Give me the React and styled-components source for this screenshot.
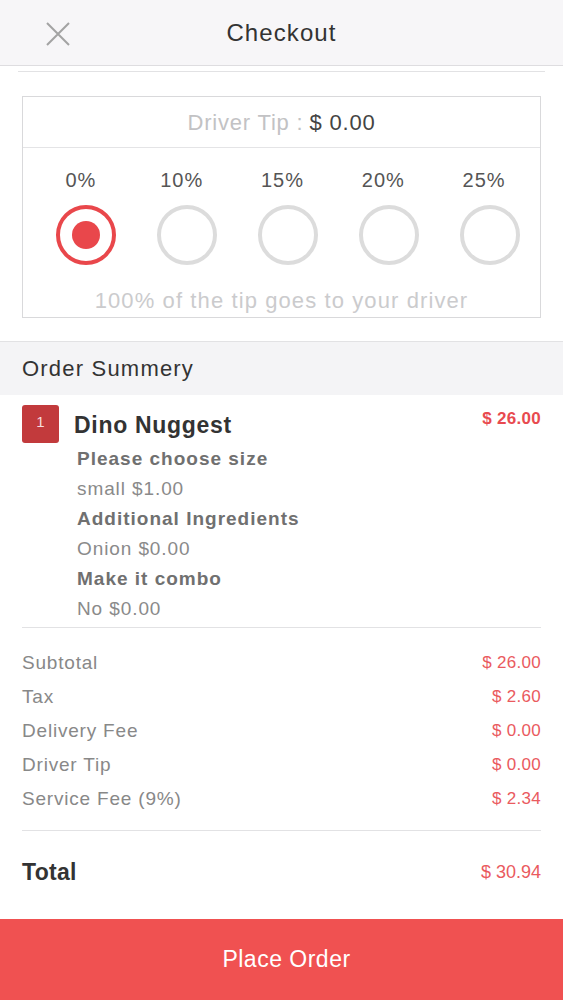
import React from 'react';
import styled, { createGlobalStyle } from 'styled-components';

const GlobalStyle = createGlobalStyle`
  html, body {
    margin: 0;
    padding: 0;
    background: #ffffff;
    font-family: "Liberation Sans", Arial, sans-serif;
  }
`;

const tips = ['0%', '10%', '15%', '20%', '25%'];

const options = [
  { label: 'Please choose size', value: 'small $1.00' },
  { label: 'Additional Ingredients', value: 'Onion $0.00' },
  { label: 'Make it combo', value: 'No $0.00' },
];

const fees = [
  { label: 'Subtotal', value: '$ 26.00' },
  { label: 'Tax', value: '$ 2.60' },
  { label: 'Delivery Fee', value: '$ 0.00' },
  { label: 'Driver Tip', value: '$ 0.00' },
  { label: 'Service Fee (9%)', value: '$ 2.34' },
];

const App = () => {
  return (
    <Page>
      <GlobalStyle />
      <Header>
        <CloseButton>
          <svg width="26" height="26" viewBox="0 0 26 26">
            <path d="M2 2 L24 24 M24 2 L2 24" stroke="#a3a3a3" strokeWidth="2" fill="none" />
          </svg>
        </CloseButton>
        <Title>Checkout</Title>
      </Header>

      <Content>
        <TopRule />
        <TipBox>
          <TipHeader>
            Driver Tip : <TipAmount>$ 0.00</TipAmount>
          </TipHeader>
          <TipGrid>
            {tips.map((t, i) => (
              <TipOption key={t}>
                <TipLabel>{t}</TipLabel>
                <Radio selected={i === 0} />
              </TipOption>
            ))}
          </TipGrid>
          <TipNote>100% of the tip goes to your driver</TipNote>
        </TipBox>
      </Content>

      <SectionBand>Order Summery</SectionBand>

      <Content>
        <Item>
          <Qty>1</Qty>
          <ItemBody>
            <ItemTop>
              <ItemName>Dino Nuggest</ItemName>
              <ItemPrice>$ 26.00</ItemPrice>
            </ItemTop>
            {options.map((o) => (
              <React.Fragment key={o.label}>
                <OptionLabel>{o.label}</OptionLabel>
                <OptionValue>{o.value}</OptionValue>
              </React.Fragment>
            ))}
          </ItemBody>
        </Item>

        <Fees>
          {fees.map((f) => (
            <FeeRow key={f.label}>
              <FeeLabel>{f.label}</FeeLabel>
              <FeeValue>{f.value}</FeeValue>
            </FeeRow>
          ))}
        </Fees>

        <TotalRow>
          <TotalLabel>Total</TotalLabel>
          <TotalValue>$ 30.94</TotalValue>
        </TotalRow>
      </Content>

      <PlaceOrder>Place Order</PlaceOrder>
    </Page>
  );
};

const Page = styled.div`
  width: 563px;
  min-height: 1000px;
  display: flex;
  flex-direction: column;
  background: #fff;
`;

const Header = styled.div`
  position: relative;
  height: 66px;
  display: flex;
  align-items: center;
  justify-content: center;
  background: #f7f6f8;
  border-bottom: 1px solid #dedde0;
  box-sizing: border-box;
`;

const CloseButton = styled.div`
  position: absolute;
  left: 45px;
  top: 21px;
  width: 26px;
  height: 26px;
`;

const Title = styled.div`
  font-size: 24px;
  letter-spacing: 1.1px;
  color: #333;
  margin-top: 1px;
`;

const Content = styled.div`
  padding: 0 22px;
`;

const TopRule = styled.div`
  height: 1px;
  background: #e2e2e4;
  margin: 5px -4px 0;
`;

const TipBox = styled.div`
  margin-top: 24px;
  border: 1px solid #d9d9db;
  height: 222px;
  box-sizing: border-box;
`;

const TipHeader = styled.div`
  height: 51px;
  display: flex;
  align-items: center;
  justify-content: center;
  border-bottom: 1px solid #e4e4e6;
  font-size: 22px;
  letter-spacing: 0.8px;
  color: #c2c2c4;
  padding-top: 1px;
  box-sizing: border-box;
`;

const TipAmount = styled.span`
  color: #444;
  margin-left: 6px;
`;

const TipGrid = styled.div`
  display: grid;
  grid-template-columns: repeat(5, 1fr);
  padding: 20px 0 0 13px;
`;

const TipOption = styled.div`
  display: flex;
  flex-direction: column;
  align-items: center;
`;

const TipLabel = styled.div`
  font-size: 20px;
  letter-spacing: 1px;
  line-height: 24px;
  color: #555;
  margin-right: 11px;
`;

const Radio = styled.div`
  margin-top: 13px;
  width: 60px;
  height: 60px;
  border-radius: 50%;
  box-sizing: border-box;
  border: 4px solid ${(p) => (p.selected ? '#e9474b' : '#dcdcdc')};
  display: flex;
  align-items: center;
  justify-content: center;

  &::after {
    content: '';
    display: ${(p) => (p.selected ? 'block' : 'none')};
    width: 28px;
    height: 28px;
    border-radius: 50%;
    background: #e9474b;
  }
`;

const TipNote = styled.div`
  margin-top: 24px;
  text-align: center;
  font-size: 22px;
  letter-spacing: 1.1px;
  line-height: 24px;
  color: #cbcbcd;
`;

const SectionBand = styled.div`
  margin-top: 23px;
  height: 54px;
  display: flex;
  align-items: center;
  padding: 0 22px;
  background: #f4f4f6;
  border-top: 1px solid #e2e2e4;
  box-sizing: border-box;
  font-size: 22px;
  letter-spacing: 1.2px;
  color: #333;
`;

const Item = styled.div`
  display: flex;
  align-items: flex-start;
  padding: 10px 0 3px;
  border-bottom: 1px solid #e2e2e4;
`;

const Qty = styled.div`
  width: 37px;
  height: 38px;
  flex-shrink: 0;
  border-radius: 3px;
  background: #c23a3c;
  color: #f5dcdc;
  font-size: 15px;
  display: flex;
  align-items: center;
  justify-content: center;
  padding-bottom: 6px;
  box-sizing: border-box;
`;

const ItemBody = styled.div`
  flex: 1;
  padding-left: 15px;
`;

const ItemTop = styled.div`
  display: flex;
  justify-content: space-between;
  align-items: flex-start;
  height: 39px;
`;

const ItemName = styled.div`
  font-size: 23px;
  letter-spacing: 0.7px;
  font-weight: 700;
  color: #333;
  line-height: 28px;
  margin-top: 6px;
`;

const ItemPrice = styled.div`
  font-size: 17px;
  letter-spacing: 0.3px;
  font-weight: 700;
  color: #e84a4f;
  line-height: 22px;
  margin-top: 3px;
`;

const OptionLabel = styled.div`
  padding-left: 3px;
  font-size: 19px;
  letter-spacing: 1px;
  line-height: 30px;
  font-weight: 700;
  color: #707070;
`;

const OptionValue = styled.div`
  padding-left: 3px;
  font-size: 19px;
  letter-spacing: 0.9px;
  line-height: 30px;
  color: #8a8a8a;
`;

const Fees = styled.div`
  padding: 18px 0 14px;
  border-bottom: 1px solid #e2e2e4;
`;

const FeeRow = styled.div`
  display: flex;
  justify-content: space-between;
  align-items: center;
  height: 34px;
`;

const FeeLabel = styled.div`
  font-size: 19px;
  letter-spacing: 0.8px;
  color: #888;
`;

const FeeValue = styled.div`
  font-size: 17px;
  letter-spacing: 0.3px;
  color: #ea5a5e;
`;

const TotalRow = styled.div`
  display: flex;
  justify-content: space-between;
  align-items: center;
  height: 40px;
  padding: 21px 0 27px;
`;

const TotalLabel = styled.div`
  font-size: 23px;
  letter-spacing: 0.3px;
  font-weight: 700;
  color: #333;
`;

const TotalValue = styled.div`
  font-size: 18px;
  color: #ea5a5e;
`;

const PlaceOrder = styled.div`
  height: 82px;
  display: flex;
  align-items: center;
  justify-content: center;
  background: #f05151;
  color: #fff;
  font-size: 23px;
  letter-spacing: 0.5px;
  padding: 0 0 2px 10px;
  box-sizing: border-box;
`;

export default App;
